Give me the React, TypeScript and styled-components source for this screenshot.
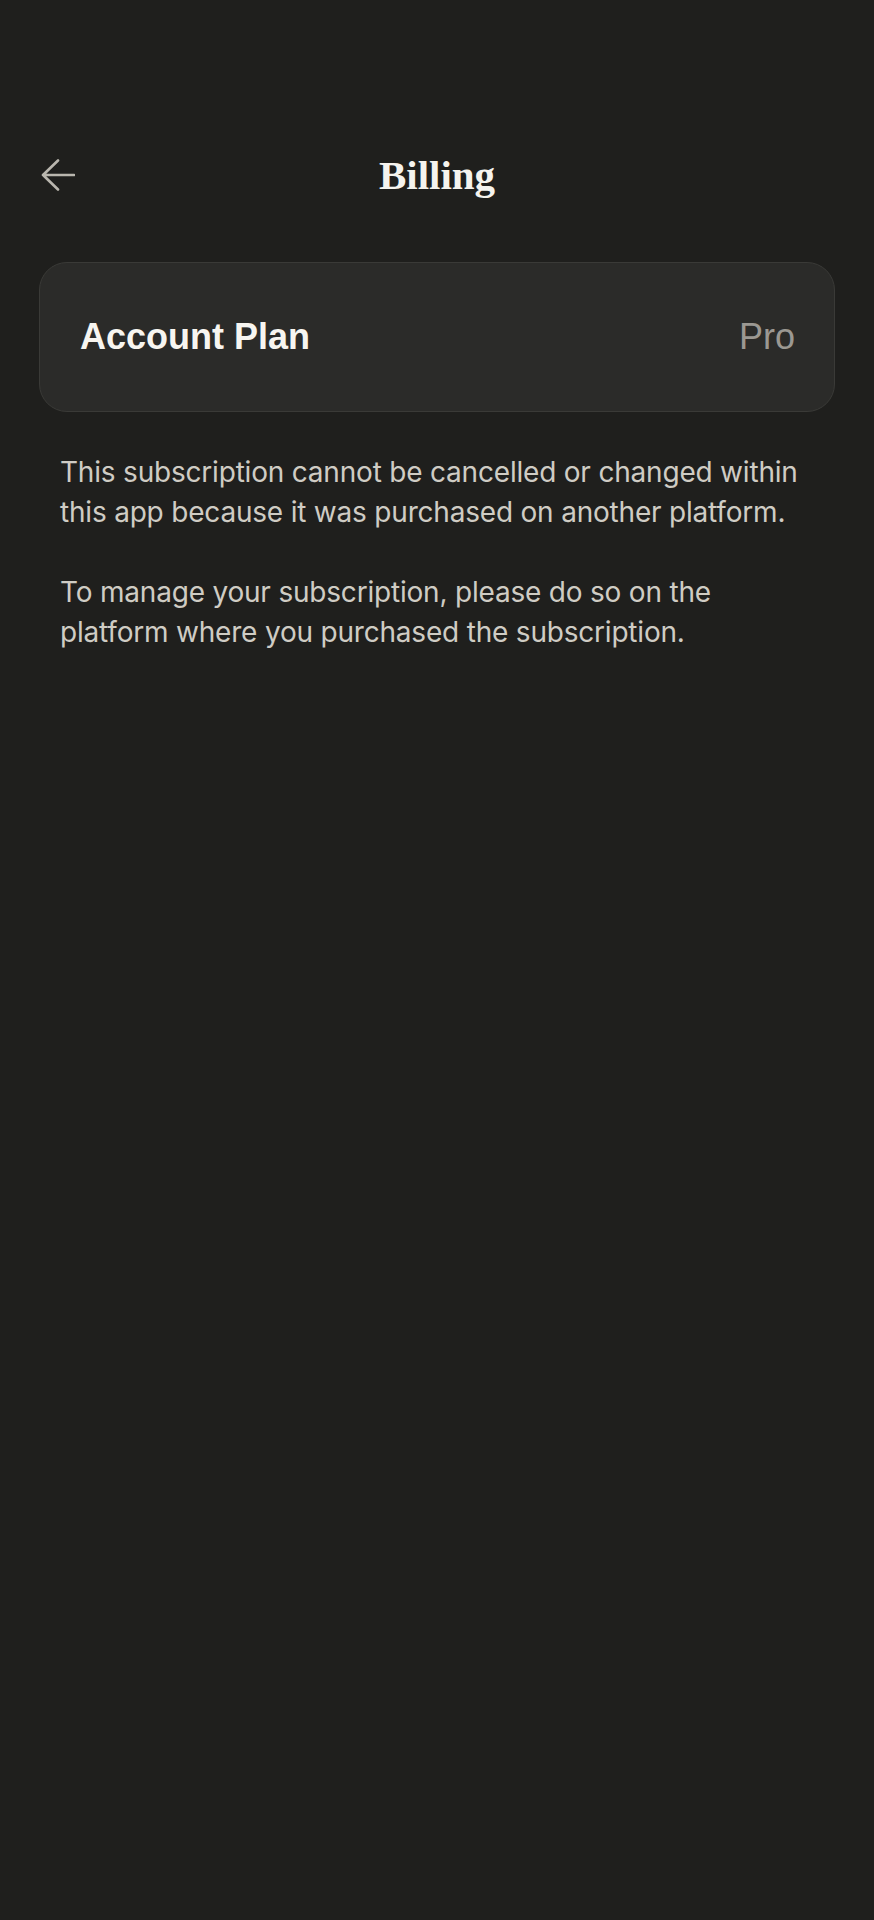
import React, { FunctionComponent } from "react";
import styled, { createGlobalStyle } from "styled-components";

const GlobalStyle = createGlobalStyle`
  html, body {
    margin: 0;
    padding: 0;
    background: #1f1f1d;
  }
  body {
    font-family: "Liberation Sans", Arial, sans-serif;
    -webkit-font-smoothing: antialiased;
  }
`;

const Screen = styled.main`
  min-height: 1920px;
  box-sizing: border-box;
  padding: 143px 39px 0 39px;
  background: #1f1f1d;
`;

const Header = styled.header`
  position: relative;
  height: 64px;
  display: flex;
  align-items: center;
  justify-content: center;
`;

const BackButton = styled.button`
  position: absolute;
  left: 2px;
  top: 50%;
  transform: translateY(-50%);
  display: flex;
  padding: 0;
  border: none;
  background: none;
  color: #b9b6ae;
  cursor: pointer;
`;

const Title = styled.h1`
  margin: 0;
  font-family: "Liberation Serif", "Times New Roman", serif;
  font-weight: 700;
  font-size: 41px;
  letter-spacing: 0;
  color: #f5f3ee;
`;

const PlanCard = styled.section`
  margin-top: 55px;
  height: 150px;
  box-sizing: border-box;
  padding: 0 39px 0 40px;
  display: flex;
  align-items: center;
  justify-content: space-between;
  background: #2b2b29;
  border: 1px solid #3a3a37;
  border-radius: 28px;
`;

const PlanLabel = styled.span`
  font-size: 36px;
  font-weight: 700;
  color: #f7f5f0;
`;

const PlanValue = styled.span`
  font-size: 36px;
  color: #9b9892;
`;

const Notes = styled.div`
  margin-top: 40px;
  padding: 0 21px;
`;

const Note = styled.p`
  margin: 0 0 40px 0;
  font-family: Inter, "Liberation Sans", sans-serif;
  font-size: 28px;
  line-height: 40px;
  letter-spacing: -0.2px;
  color: #cfccc4;
`;

const ArrowLeft = () => (
  <svg width="34" height="32" viewBox="0 0 34 32" fill="none">
    <path
      d="M17 1.5 L2 16 L17 30.5 M2 16 H33"
      stroke="currentColor"
      strokeWidth="2.6"
      strokeLinecap="round"
      strokeLinejoin="round"
    />
  </svg>
);

const App: FunctionComponent = () => {
  return (
    <React.Fragment>
      <GlobalStyle />
      <Screen>
        <Header>
          <BackButton aria-label="Back">
            <ArrowLeft />
          </BackButton>
          <Title>Billing</Title>
        </Header>
        <PlanCard>
          <PlanLabel>Account Plan</PlanLabel>
          <PlanValue>Pro</PlanValue>
        </PlanCard>
        <Notes>
          <Note>
            This subscription cannot be cancelled or changed within this app
            because it was purchased on another platform.
          </Note>
          <Note>
            To manage your subscription, please do so on the platform where
            you purchased the subscription.
          </Note>
        </Notes>
      </Screen>
    </React.Fragment>
  );
};

export default App;
